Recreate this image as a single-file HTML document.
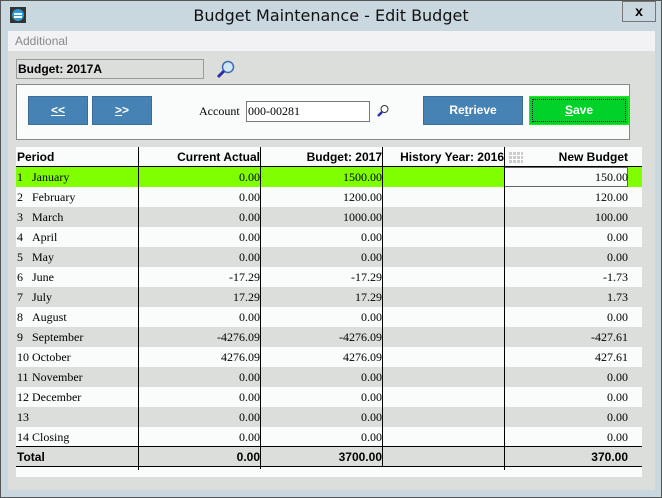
<!DOCTYPE html>
<html><head><style>
*{margin:0;padding:0;box-sizing:border-box}
body{width:662px;height:498px;overflow:hidden;background:#c9d8df;font-family:"Liberation Sans",sans-serif;position:relative}
.abs{position:absolute}
#win{left:0;top:0;width:662px;height:498px;border:1px solid #555;background:#c9d8df}
#title{left:0;top:0;width:662px;height:31px;text-align:center;font-size:16px;line-height:32px;color:#111;font-family:"DejaVu Sans","Liberation Sans",sans-serif}
#menu{left:8px;top:31px;width:647px;height:20px;background:#f2f1f4;font-size:12px;color:#888;line-height:20px;padding-left:7px}
#bodyb{left:8px;top:51px;width:647px;height:439px;background:#dcdedb}
.btn{background:#4682b4;border:1px solid #3a6d97;color:#fff;font-weight:bold;font-size:12px;text-align:center;line-height:27px}
.c{position:absolute;font-family:"Liberation Serif",serif;font-size:12px;color:#000;height:20px;line-height:21px}
.r{text-align:right}
.h{font-family:"Liberation Sans",sans-serif;font-weight:bold}
.vl{position:absolute;width:1px;background:#000;top:147px;height:320px}
</style></head><body>
<div id="win" class="abs"></div>
<div id="title" class="abs">Budget Maintenance - Edit Budget</div>
<div class="abs" style="left:10px;top:7px;width:16px;height:16px;background:#333;"><div style="position:absolute;left:2px;top:2px;width:12px;height:12px;border-radius:50%;background:#2a9ad8"></div><div style="position:absolute;left:4px;top:6px;width:8px;height:2px;background:#fff"></div><div style="position:absolute;left:4px;top:9px;width:8px;height:2px;background:#fff"></div></div>
<div class="abs" style="left:622px;top:1px;width:34px;height:21px;border:1px solid #777;text-align:center;font-weight:bold;font-size:14px;line-height:19px">x</div>
<div id="menu" class="abs">Additional</div>
<div id="bodyb" class="abs"></div>
<div class="abs" style="left:16px;top:59px;width:188px;height:20px;border:1px solid #999;background:#dcdedb;font-size:12px;font-weight:bold;line-height:18px;padding-left:1px">Budget: 2017A</div>
<svg class="abs" style="left:216px;top:60px" width="20" height="20"><circle cx="12" cy="7" r="5.5" fill="#cfe6fb" stroke="#3b6db5" stroke-width="1.5"/><line x1="8" y1="11" x2="2" y2="17" stroke="#2a2fa8" stroke-width="3"/></svg>
<div class="abs" style="left:16px;top:84px;width:614px;height:56px;border:1px solid #888;background:#fafbfb"></div>
<div class="abs btn" style="left:28px;top:96px;width:60px;height:29px"><u>&lt;&lt;</u></div>
<div class="abs btn" style="left:92px;top:96px;width:60px;height:29px"><u>&gt;</u>&gt;</div>
<div class="abs" style="left:199px;top:104px;font-family:'Liberation Serif',serif;font-size:12px">Account</div>
<div class="abs" style="left:246px;top:101px;width:124px;height:21px;border:1px solid #777;background:#fff;font-family:'Liberation Serif',serif;font-size:12px;line-height:19px;padding-left:1px">000-00281</div>
<svg class="abs" style="left:377px;top:104px" width="12" height="14"><circle cx="7.5" cy="5" r="3.5" fill="#fff" stroke="#333" stroke-width="1"/><line x1="5" y1="8" x2="1" y2="12" stroke="#2a2fa8" stroke-width="2.5"/></svg>
<div class="abs btn" style="left:423px;top:96px;width:100px;height:29px">Re<u>t</u>rieve</div>
<div class="abs btn" style="left:529px;top:96px;width:100px;height:29px;background:#00d22a;border:1px solid #1ee81e;outline:1px dotted #000;outline-offset:-4px"><u>S</u>ave</div>
<div class="abs" style="left:16px;top:147px;width:626px;height:330px;background:#fafbfb"></div>
<div id="rows"></div>
<div class="abs" style="left:16px;top:166px;width:626px;height:1px;background:#000"></div>
<div class="abs" style="left:16px;top:446px;width:626px;height:1px;background:#000"></div>
<div class="abs" style="left:16px;top:466px;width:626px;height:1px;background:#000"></div>
<div class="vl" style="left:138px;height:323px"></div>
<div class="vl" style="left:260px;height:322px"></div>
<div class="vl" style="left:382px;height:320px"></div>
<div class="vl" style="left:504px;height:323px"></div>
<div class="c h" style="left:17px;top:147px">Period</div>
<div class="c h r" style="left:140px;width:120px;top:147px">Current Actual</div>
<div class="c h r" style="left:262px;width:120px;top:147px">Budget: 2017</div>
<div class="c h r" style="left:384px;width:120px;top:147px">History Year: 2016</div>
<svg class="abs" style="left:509px;top:152px" width="14" height="11"><g fill="#ccc"><rect x="0" y="0" width="14" height="11"/></g><g stroke="#fff" stroke-width="1"><line x1="0" y1="3.5" x2="14" y2="3.5"/><line x1="0" y1="7.5" x2="14" y2="7.5"/><line x1="3.5" y1="0" x2="3.5" y2="11"/><line x1="7.5" y1="0" x2="7.5" y2="11"/><line x1="11.5" y1="0" x2="11.5" y2="11"/></g></svg>
<div class="c h r" style="left:506px;width:122px;top:147px">New Budget</div>
<script>
var d=[["1","January","0.00","1500.00","150.00"],["2","February","0.00","1200.00","120.00"],["3","March","0.00","1000.00","100.00"],["4","April","0.00","0.00","0.00"],["5","May","0.00","0.00","0.00"],["6","June","-17.29","-17.29","-1.73"],["7","July","17.29","17.29","1.73"],["8","August","0.00","0.00","0.00"],["9","September","-4276.09","-4276.09","-427.61"],["10","October","4276.09","4276.09","427.61"],["11","November","0.00","0.00","0.00"],["12","December","0.00","0.00","0.00"],["13","","0.00","0.00","0.00"],["14","Closing","0.00","0.00","0.00"]];
var h="";
d.forEach(function(r,i){var t=167+i*20;var bg=i==0?"#80ff00":(i%2==0?"#dcdedb":"#fafbfb");
h+='<div class="abs" style="left:16px;top:'+t+'px;width:626px;height:20px;background:'+bg+'"></div>';
h+='<div class="c" style="left:17px;top:'+t+'px">'+r[0]+'</div><div class="c" style="left:32px;top:'+t+'px">'+r[1]+'</div>';
h+='<div class="c r" style="left:140px;width:120px;top:'+t+'px">'+r[2]+'</div>';
h+='<div class="c r" style="left:262px;width:120px;top:'+t+'px">'+r[3]+'</div>';
if(i==0)h+='<div class="abs" style="left:504px;top:'+t+'px;width:124px;height:20px;background:#fafbfb;border:1px solid #666"></div>';
h+='<div class="c r" style="left:506px;width:122px;top:'+t+'px">'+r[4]+'</div>';});
h+='<div class="abs" style="left:16px;top:447px;width:626px;height:19px;background:#dcdedb"></div>';
h+='<div class="c h" style="left:17px;top:447px">Total</div><div class="c h r" style="left:140px;width:120px;top:447px">0.00</div><div class="c h r" style="left:262px;width:120px;top:447px">3700.00</div><div class="c h r" style="left:506px;width:122px;top:447px">370.00</div>';
document.getElementById("rows").innerHTML=h;
</script>
</body></html>
